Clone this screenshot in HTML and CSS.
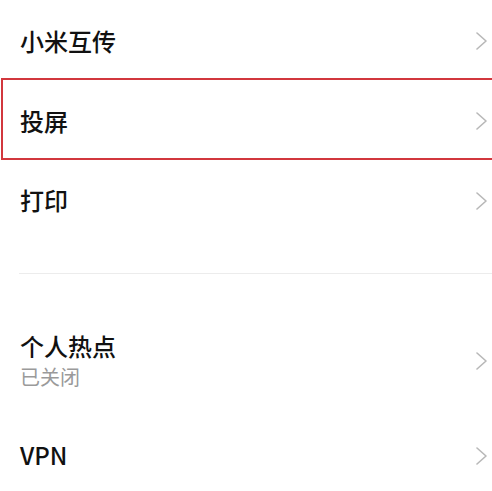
FILE: index.html
```html
<!DOCTYPE html>
<html lang="zh-CN">
<head>
  <meta charset="UTF-8">
  <meta name="viewport" content="width=device-width, initial-scale=1.0">
  <title>连接与共享</title>
  <link rel="stylesheet" href="styles.css">
</head>
<body>
  <div class="list">
    <div class="item first">
      <div class="label">小米互传</div>
      <svg class="arrow" width="11" height="18" viewBox="0 0 11 18"><polyline points="1,1 10,9 1,17"/></svg>
    </div>
    <div class="item highlight">
      <div class="label">投屏</div>
      <svg class="arrow" width="11" height="18" viewBox="0 0 11 18"><polyline points="1,1 10,9 1,17"/></svg>
    </div>
    <div class="item">
      <div class="label">打印</div>
      <svg class="arrow" width="11" height="18" viewBox="0 0 11 18"><polyline points="1,1 10,9 1,17"/></svg>
    </div>
  </div>

  <div class="divider"></div>

  <div class="list">
    <div class="item tall">
      <div class="text">
        <div class="label">个人热点</div>
        <div class="sub">已关闭</div>
      </div>
      <svg class="arrow" width="11" height="18" viewBox="0 0 11 18"><polyline points="1,1 10,9 1,17"/></svg>
    </div>
    <div class="item">
      <div class="label">VPN</div>
      <svg class="arrow" width="11" height="18" viewBox="0 0 11 18"><polyline points="1,1 10,9 1,17"/></svg>
    </div>
  </div>
</body>
</html>
```

FILE: styles.css
```css
body {
  margin: 0;
  background: #fff;
  font-family: "Noto Sans CJK SC", "Noto Sans", sans-serif;
  overflow: hidden;
}
.list {
  display: flex;
  flex-direction: column;
}
.item {
  display: flex;
  align-items: center;
  justify-content: space-between;
  height: 81px;
  padding: 0 5px 0 20px;
  box-sizing: border-box;
}
.item.first {
  height: 78px;
  padding-top: 4px;
}
.item.highlight {
  height: 82px;
  margin-left: 1px;
  padding-left: 17px;
  padding-top: 4px;
  border: 2px solid #d2373d;
  border-right: none;
}
.item.tall {
  height: 141px;
  padding-top: 32px;
}
.label {
  font-size: 24px;
  font-weight: 500;
  color: #111;
  line-height: 1.2;
}
.sub {
  margin-top: 3px;
  font-size: 20px;
  color: #9a9a9a;
  line-height: 1.25;
}
.arrow {
  fill: none;
  stroke: #b8b8b8;
  stroke-width: 1.6;
  stroke-linecap: round;
  stroke-linejoin: round;
}
.divider {
  height: 1px;
  background: #ececec;
  margin: 32px 0 0 19px;
}
```
